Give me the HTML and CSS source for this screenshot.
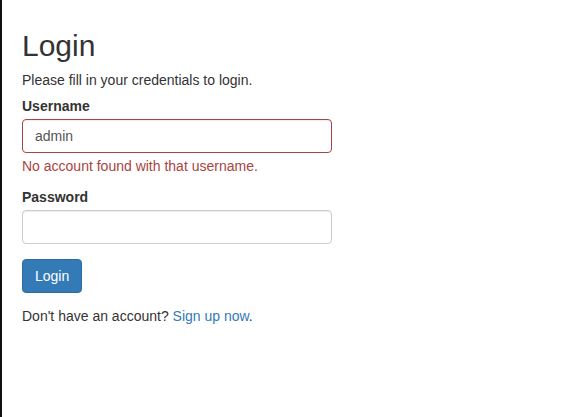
FILE: index.html
```html
<!DOCTYPE html>
<html>
<head>
<meta charset="utf-8">
<link rel="stylesheet" href="styles.css">
</head>
<body>
<div class="wrapper">
  <h2 class="title">Login</h2>
  <p class="intro">Please fill in your credentials to login.</p>
  <form class="form">
    <div class="form-group has-error">
      <label class="label">Username</label>
      <input type="text" class="form-control" value="admin">
      <span class="help-block">No account found with that username.</span>
    </div>
    <div class="form-group">
      <label class="label">Password</label>
      <input type="password" class="form-control">
      <span class="help-block"></span>
    </div>
    <div class="form-group last">
      <input type="submit" class="btn" value="Login">
    </div>
    <p class="signup">Don't have an account? <a class="link" href="#">Sign up now</a>.</p>
  </form>
</div>
</body>
</html>
```
FILE: styles.css
```css
html, body {
  margin: 0;
  height: 100%;
}
body {
  font-family: "Liberation Sans", Arial, sans-serif;
  font-size: 14px;
  line-height: 20px;
  color: #333;
  background: #fff;
  border-left: 2px solid #111;
  box-sizing: border-box;
}
.wrapper {
  width: 310px;
  padding: 20px;
}
.title {
  font-size: 30px;
  font-weight: 500;
  line-height: 33px;
  margin: 9px 0 8px;
}
.intro {
  margin: 0 0 6px;
}
.form {
  margin: 0;
}
.form-group {
  margin-bottom: 11px;
}
.label {
  display: block;
  font-weight: bold;
  margin-bottom: 3px;
}
.form-control {
  display: block;
  box-sizing: border-box;
  width: 100%;
  height: 34px;
  padding: 6px 12px;
  font-family: inherit;
  font-size: 14px;
  line-height: 20px;
  color: #555;
  background: #fff;
  border: 1px solid #ccc;
  border-radius: 4px;
  box-shadow: inset 0 1px 1px rgba(0,0,0,.075);
  margin: 0;
}
.has-error .form-control {
  border-color: #a94442;
}
.help-block {
  display: block;
  margin-top: 3px;
  color: #a94442;
}
.help-block:empty {
  margin-top: 0;
  height: 4px;
}
.last {
  margin-bottom: 0;
}
.btn {
  display: block;
  height: 34px;
  padding: 6px 12px;
  font-family: inherit;
  font-size: 14px;
  line-height: 20px;
  color: #fff;
  background: #337ab7;
  border: 1px solid #2e6da4;
  border-radius: 4px;
  margin: 0;
}
.signup {
  margin: 13px 0 0;
}
.link {
  color: #337ab7;
  text-decoration: none;
}
```
